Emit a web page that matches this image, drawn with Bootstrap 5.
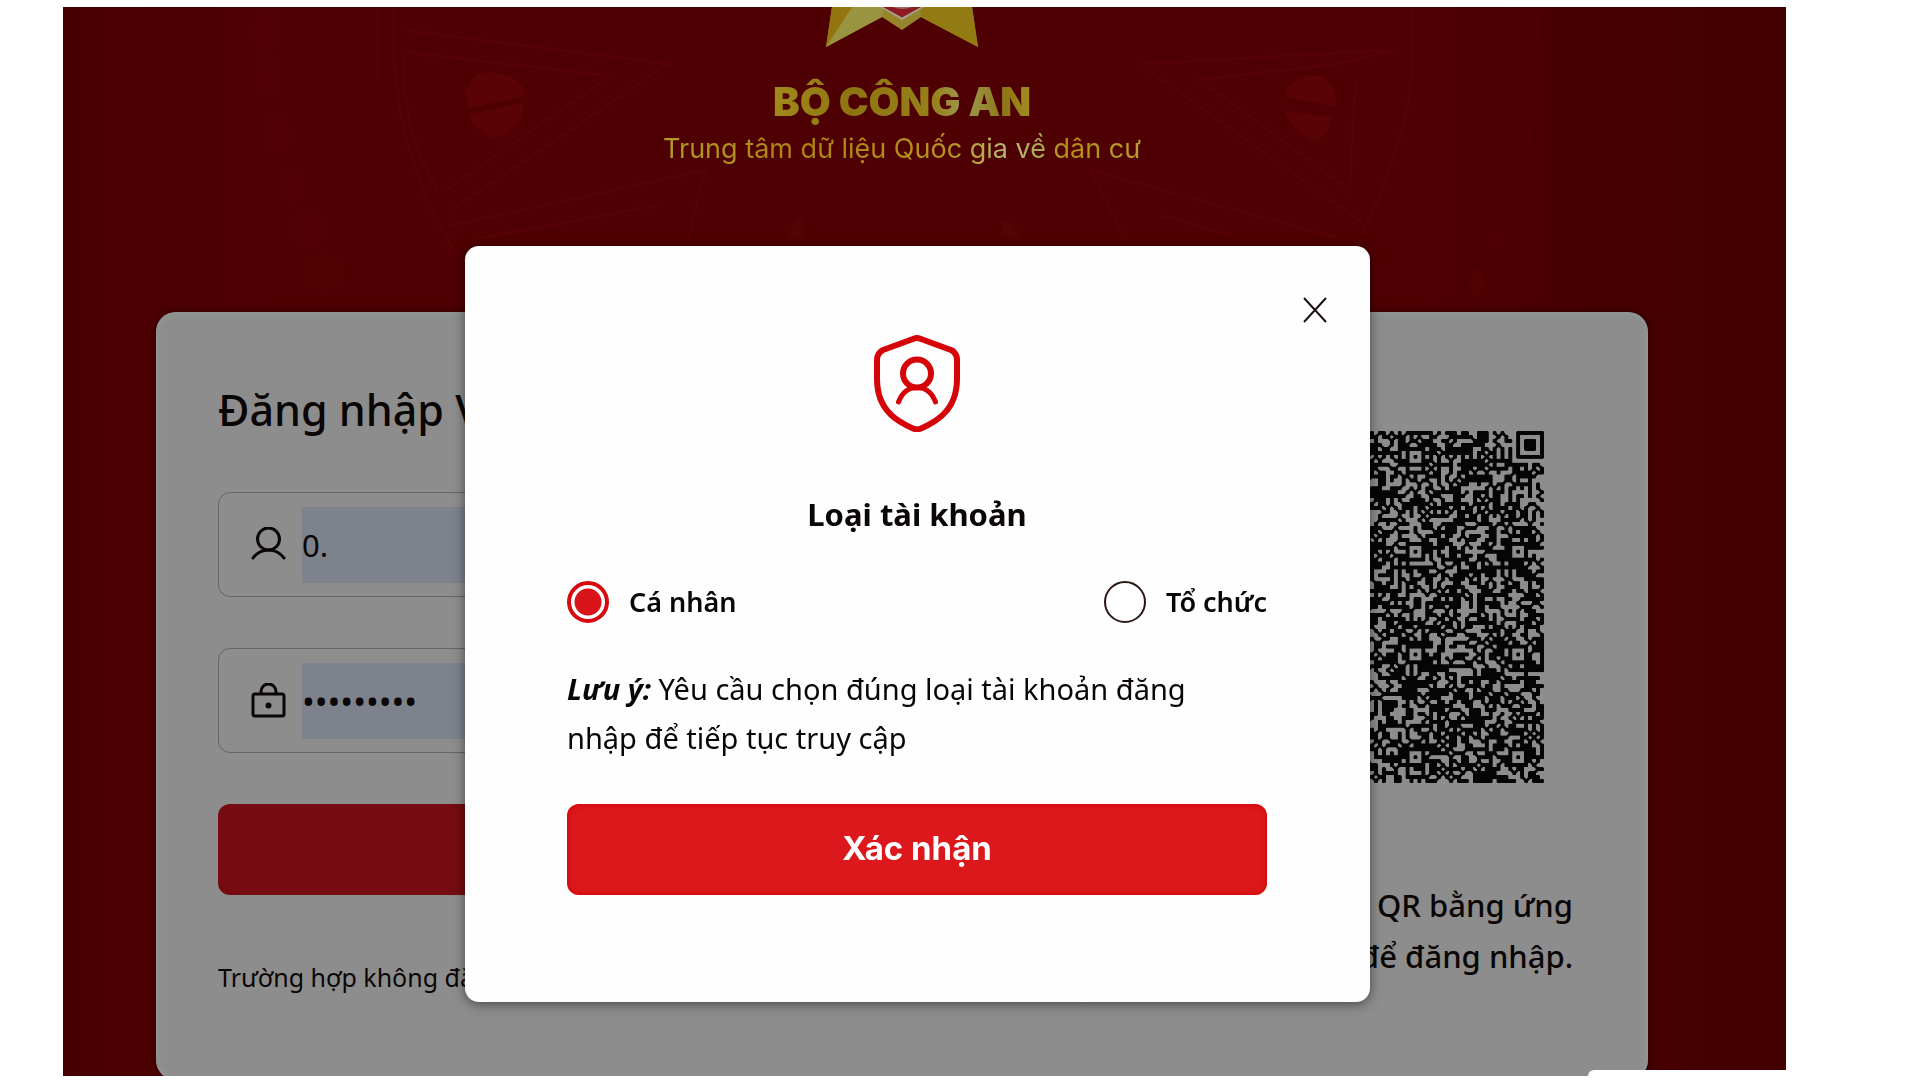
<!DOCTYPE html>
<html lang="vi">
<head>
<meta charset="utf-8">
<meta name="viewport" content="width=device-width, initial-scale=1">
<title>Đăng nhập VNeID</title>
<link href="https://cdn.jsdelivr.net/npm/bootstrap@5.3.0/dist/css/bootstrap.min.css" rel="stylesheet">
<style>
  body { background: #fff; color: #0b0606; font-family: "Noto Sans", "Open Sans", sans-serif; }
  .stage { margin: 7px 134px 0 63px; height: calc(100vh - 11px); min-height: 900px; background: linear-gradient(90deg, #490002 0, #4f0002 12%, #4f0002 78%, #440001 96%); }
  .stage-art { width: 100%; height: 320px; top: 0; left: 0; }
  .stage-body { padding: 0 138px 0 93px; }
  .gold { background: linear-gradient(90deg, #a08a1c, #8d7410 30%, #96801a 62%, #9c9a52 74%, #8d7614 90%, #a38e22); -webkit-background-clip: text; background-clip: text; color: transparent; }
  .ministry { font: 900 40px/50px Inter, sans-serif; margin: 30px 0 0; }
  .agency { font: 400 27px/44px Inter, sans-serif; margin: 0 0 141px; }
  .agency.gold { background-image: linear-gradient(90deg, #b49a25, #ad8412 30%, #b8951d 60%, #b5bd78 73%, #a9a850 79%, #b38c15 84%, #b8a02a); }
  .login-panel { background: #8d8d8d; border-radius: 20px; height: 768px; box-shadow: inset 0 0 6px #93a09e, 0 0 8px rgba(0,0,0,.4); }
  .login-form { padding: 64px 60px 0 62px; }
  .login-title { font-size: 43px; line-height: 68px; font-weight: 500; margin: 0 0 48px; }
  .field { height: 105px; border: 1px solid #656565; border-radius: 12px; padding: 0 14px 0 32px; margin-bottom: 51px; gap: 16px; }
  .field input { height: 76px; background: #7d828c; color: #0b0606; font-size: 31px; }
  .field input[type=password] { font-size: 34px; }
  .field svg { width: 35px; height: 36px; flex: none; }
  .login-submit { height: 91px; border-radius: 12px; background: #760c11; color: #8d8d8d; font-size: 31px; border: 0; }
  .help-line { font-size: 25px; line-height: 40px; margin: 62px 0 0; }
  .qr-side { width: 562px; padding-top: 119px; border-left: 1px solid #898989; }
  .qr-side canvas { width: 352px; height: 352px; }
  .qr-text { font-size: 31px; line-height: 51px; font-weight: 500; margin: 97px 0 0; padding-left: 10px; }
  .dialog-layer { padding: 239px 14px 0 0; }
  .dialog-box { width: 905px; background: #fefefe; border-radius: 14px; padding-bottom: 107px; box-shadow: 0 2px 12px rgba(0,0,0,.5); }
  .dialog-top { padding: 42px 33px 0 0; height: 89px; }
  .close-btn { width: 44px; height: 44px; background: none; border: 0; padding: 9px 10px; display: block; }
  .dialog-content { padding: 0 103px 0 102px; }
  .shield { width: 88px; height: 97px; }
  .dialog-title { font-size: 31px; line-height: 48px; font-weight: 700; margin: 58px 0 43px; }
  .choice { gap: 20px; font-size: 27px; line-height: 42px; font-weight: 600; }
  .choice input { appearance: none; width: 42px; height: 42px; margin: 0; border: 2px solid #2b1613; border-radius: 50%; background: #fff; }
  .choice input:checked { border: 4px solid #d50b10; background: radial-gradient(circle, #d8141a 13px, #fff 14px); }
  .notice { font-size: 29px; line-height: 49px; margin: 41px 0 42px; }
  .confirm-btn { height: 91px; border: 0; border-radius: 12px; background: #dc181c; box-shadow: inset 0 0 6px #d00005; color: #fff; font: 700 33px/48px Inter, sans-serif; padding: 0 0 4px; }
  .corner-tab { right: 0; bottom: 0; width: 198px; height: 6px; background: #fff; border-radius: 6px 0 0 0; }
</style>
<script src="https://cdn.jsdelivr.net/npm/bootstrap@5.3.0/dist/js/bootstrap.bundle.min.js"></script>
</head>
<body>
<div class="stage position-relative overflow-hidden">
  <svg class="stage-art position-absolute" viewBox="63 7 1723 320" preserveAspectRatio="none" fill="none" stroke="#5a0209" stroke-width="3" aria-hidden="true">
    <path d="M394 7V60Q400 150 438 222L460 262M378 7V80" opacity=".7"/>
    <path d="M404 30 668 64 452 210M404 52V90Q412 150 438 190M404 52 610 76 446 190" opacity=".7"/>
    <path d="M450 226 705 170 688 240M470 240 660 205" opacity=".6"/>
    <path d="M1411 7V80Q1404 150 1362 234M1394 50 1140 64 1362 222M1394 50Q1350 62 1320 66L1200 80 1350 190Q1352 130 1356 82" opacity=".7"/>
    <path d="M1090 170 1345 240M1090 170 1125 240M1160 215 1230 235" opacity=".6"/>
    <g fill="#590307" stroke="none">
      <path d="M465 96Q470 70 495 72 522 76 526 96L470 108ZM470 114 524 103Q522 132 496 138 474 134 470 114Z"/>
      <path d="M1286 88Q1300 74 1322 76 1338 86 1336 106L1286 98ZM1284 110 1332 118Q1328 138 1312 140 1294 134 1284 110Z"/>
      <path d="M788 240Q790 222 801 218 806 226 804 240ZM1000 240Q1000 222 1006 220 1018 228 1022 240Z" opacity=".6"/>
      <g opacity=".3"><ellipse cx="266" cy="30" rx="13" ry="20"/><ellipse cx="268" cy="78" rx="10" ry="18"/><ellipse cx="277" cy="134" rx="12" ry="18"/><ellipse cx="292" cy="186" rx="12" ry="16"/><ellipse cx="308" cy="230" rx="15" ry="18"/><ellipse cx="324" cy="272" rx="16" ry="18"/>
      <ellipse cx="1536" cy="30" rx="6" ry="14"/><ellipse cx="1532" cy="86" rx="6" ry="14"/><ellipse cx="1527" cy="136" rx="6" ry="14"/><ellipse cx="1515" cy="186" rx="6" ry="14"/><ellipse cx="1496" cy="238" rx="7" ry="12"/><ellipse cx="1477" cy="282" rx="8" ry="15"/></g>
    </g>
  </svg>

  <div class="stage-body position-relative">
    <header class="text-center d-flex flex-column align-items-center">
      <svg width="154" height="40" viewBox="0 0 154 40" aria-hidden="true">
        <defs><linearGradient id="g1"><stop stop-color="#9c8420"/><stop offset="1" stop-color="#8f8638"/></linearGradient></defs>
        <path fill="url(#g1)" d="M7 0 1 40 57 10 77 23 96 10 153 40 147 0Z"/>
        <path fill="#9a9340" d="M27 0H60L57 10 1 40Z"/>
        <path fill="#937510" d="M7 0H27L1 40Z"/>
        <path fill="#937b14" d="M95 0H147L153 40 96 10Z"/>
        <path fill="#a5a18a" d="M55 0 77 13 99 0Z"/>
        <path fill="#8e1a22" d="M58 0 77 10.500 96 0Z"/>
        <path fill="#9c6a60" d="M68 0Q77 4 87 0Z"/>
      </svg>
      <h1 class="ministry gold">BỘ CÔNG AN</h1>
      <p class="agency gold">Trung tâm dữ liệu Quốc gia về dân cư</p>
    </header>

    <main class="login-panel d-flex">
      <form class="login-form flex-grow-1">
        <h2 class="login-title">Đăng nhập VNeID</h2>
        <div class="field d-flex align-items-center w-100">
          <svg viewBox="0 0 35 36" fill="none" stroke="#0b0606" stroke-width="3" stroke-linecap="round" aria-hidden="true"><circle cx="17.500" cy="12" r="11"/><path d="M2 31Q8 23 17.500 23T33 31"/></svg>
          <input class="form-control border-0 rounded-0 shadow-none p-0" type="text" aria-label="Số định danh" value="0.">
        </div>
        <div class="field d-flex align-items-center w-100">
          <svg viewBox="0 0 35 36" fill="none" stroke="#0b0606" stroke-width="3" aria-hidden="true"><rect x="2" y="11" width="31" height="22" rx="2"/><path d="M10 11V8.500a7.500 7.500 0 0 1 15 0V11"/><circle cx="17.500" cy="22.500" r="1.500" fill="#0b0606"/></svg>
          <input class="form-control border-0 rounded-0 shadow-none p-0" type="password" aria-label="Mật khẩu" value="123456789">
        </div>
        <button class="login-submit btn w-100" type="button" aria-label="Đăng nhập"></button>
        <p class="help-line">Trường hợp không đăng nhập được</p>
      </form>
      <section class="qr-side flex-shrink-0 text-center">
        <canvas id="qr" width="712" height="712" class="d-block mx-auto"></canvas>
        <p class="qr-text">Vui lòng quét QR bằng ứng<br>dụng VNeID để đăng nhập.</p>
      </section>
    </main>
  </div>

  <div class="dialog-layer position-absolute top-0 start-0 w-100 d-flex justify-content-center">
    <div class="dialog-box" role="dialog" aria-labelledby="dialogTitle">
      <div class="dialog-top d-flex justify-content-end">
        <button class="close-btn" type="button" aria-label="Đóng"><svg class="d-block" width="24" height="26" viewBox="0 0 24 26" stroke="#1c1010" stroke-width="2"><path d="M1 1 23 25M23 1 1 25"/></svg></button>
      </div>
      <form class="dialog-content">
        <svg class="shield d-block mx-auto" viewBox="0 0 88 97" fill="none" stroke="#d50408" stroke-width="6" stroke-linecap="round" stroke-linejoin="round" aria-hidden="true">
          <path d="M40 4Q44 2 48 4L78 15Q84 18 84 25V44Q84 72 62 86Q54 91 48 93.500Q44 95 40 93.500Q34 91 26 86Q4 72 4 44V25Q4 18 10 15Z"/>
          <circle cx="44" cy="38.500" r="14"/><path stroke-width="5" d="M25.500 67Q31 52.500 44 52.500T62.500 67"/>
        </svg>
        <h2 class="dialog-title text-center" id="dialogTitle">Loại tài khoản</h2>
        <div class="d-flex justify-content-between">
          <label class="choice d-flex align-items-center" for="personal"><input type="radio" name="account" id="personal" checked>Cá nhân</label>
          <label class="choice d-flex align-items-center" for="organisation"><input type="radio" name="account" id="organisation">Tổ chức</label>
        </div>
        <p class="notice"><strong><em>Lưu ý:</em></strong> Yêu cầu chọn đúng loại tài khoản đăng<br>nhập để tiếp tục truy cập</p>
        <button class="confirm-btn btn w-100" type="button">Xác nhận</button>
      </form>
    </div>
  </div>
  <div class="corner-tab position-absolute"></div>
</div>
<script>
  // 89 x 89 module code with finder, timing and alignment patterns
  const n = 89, s = 8, c = document.getElementById('qr').getContext('2d');
  let seed = 20231;
  const rnd = () => (seed = (seed * 1103515245 + 12345) % 2147483648) / 2147483648;
  const m = Array.from({ length: n }, () => Array.from({ length: n }, () => rnd() < 0.6));
  const square = (cx, cy, r, f) => {
    for (let y = -r; y <= r; y++) for (let x = -r; x <= r; x++)
      if (m[cy + y] && cx + x >= 0 && cx + x < n) m[cy + y][cx + x] = f(Math.max(Math.abs(x), Math.abs(y)));
  };
  for (let i = 0; i < n; i++) { m[6][i] = i % 2 === 0; m[i][6] = i % 2 === 0; }
  for (const y of [6, 30, 56, 82]) for (const x of [6, 30, 56, 82]) square(x, y, 2, d => d !== 1);
  for (const [x, y] of [[3, 3], [85, 3], [3, 85]]) square(x, y, 4, d => d !== 2 && d !== 4);
  c.fillStyle = '#050505';
  const on = (x, y) => x >= 0 && y >= 0 && x < n && y < n && m[y][x];
  const joint = (x, y) => { c.beginPath(); c.moveTo(x - 4, y); c.lineTo(x, y + 4); c.lineTo(x + 4, y); c.lineTo(x, y - 4); c.fill(); };
  for (let y = 0; y < n; y++) for (let x = 0; x < n; x++) {
    const u = on(x, y - 1), d = on(x, y + 1), l = on(x - 1, y), r = on(x + 1, y);
    if (m[y][x]) {
      c.beginPath();
      c.roundRect(x * s, y * s, s, s, [u || l ? 0 : 3, u || r ? 0 : 3, d || r ? 0 : 3, d || l ? 0 : 3]);
      c.fill();
      if (on(x + 1, y + 1) && !r && !d) joint((x + 1) * s, (y + 1) * s);
    } else if (r && d && !on(x + 1, y + 1)) joint((x + 1) * s, (y + 1) * s);
  }
</script>
</body>
</html>
